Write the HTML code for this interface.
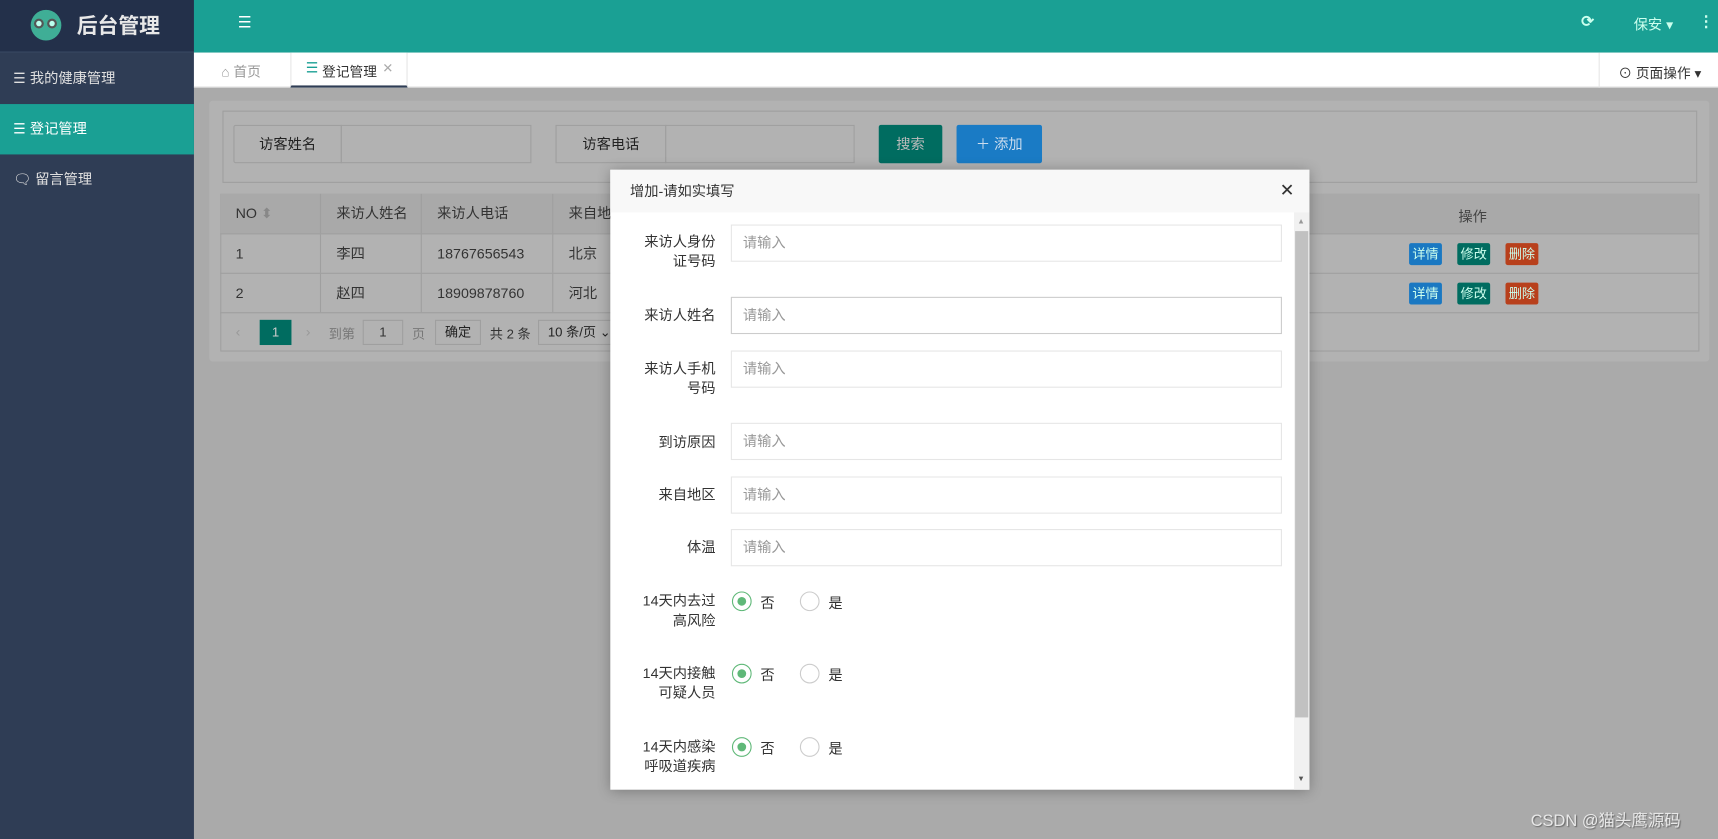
<!DOCTYPE html>
<html><head><meta charset="utf-8"><style>
*{box-sizing:border-box;margin:0;padding:0}
html,body{width:1718px;height:839px;overflow:hidden;background:#aaa}
body{font-family:"Liberation Sans","Noto Sans CJK SC",sans-serif;font-size:13px;color:#333}
#w{position:absolute;left:0;top:0;width:1568px;height:766px;transform:scale(1.0957,1.0953);transform-origin:0 0}
.a{position:absolute}
.side{left:0;top:0;width:177px;height:766px;background:#2f3d55}
.logo{left:0;top:0;width:177px;height:48px;background:#23304a;border-bottom:1px solid #3a4a64}
.mi{left:0;width:177px;height:46px;line-height:46px;padding-left:12px;color:#e0e0e0;font-size:13px}
.hdr{left:177px;top:0;width:1391px;height:48px;background:#1aa094}
.tabs{left:177px;top:48px;width:1391px;height:32px;background:#fff;border-bottom:1px solid #ddd}
.panel{left:191px;top:92px;width:1369px;height:238px;background:#b2b2b2;border-radius:3px}
.lb{border:1px solid #9f9f9f;height:35px;line-height:33px;font-size:13px;color:#222}
.th{background:#a9a9a9}
.cell{position:absolute;line-height:35px;padding-left:14px;color:#333;border-right:1px solid #9f9f9f;height:100%}
.row{position:absolute;left:201px;width:1349px;border-bottom:1px solid #9f9f9f}
.ob{position:absolute;width:30px;height:20px;line-height:20px;text-align:center;color:#cfe;font-size:12px;border-radius:2px}
.modal{left:557px;top:155px;width:638px;height:566px;background:#fff;box-shadow:0 1px 12px rgba(0,0,0,.3)}
.mh{left:0;top:0;width:638px;height:39px;background:#f8f8f8;line-height:39px;padding-left:18px;font-size:13px;color:#333}
.fl{position:absolute;right:542px;text-align:right;font-size:13px;line-height:18px;color:#333;width:90px}
.in{position:absolute;left:110px;width:503px;height:34px;border:1px solid #e6e6e6;line-height:32px;padding-left:10px;color:#999;font-size:13px}
.rd{position:absolute;width:18px;height:18px;border-radius:50%;border:1px solid #ccc}
.rd.on{border-color:#5fb878}
.rd.on:after{content:"";position:absolute;left:4px;top:4px;width:8px;height:8px;border-radius:50%;background:#5fb878}
.rt{position:absolute;font-size:13px;color:#333}
</style></head><body><div id="w">
<div class="a side"></div>
<div class="a logo">
 <div class="a" style="left:28px;top:9px;width:28px;height:28px;border-radius:50%;background:#3fae96"></div>
 <div class="a" style="left:31px;top:17px;width:9px;height:9px;border-radius:50%;background:#bfe;border:2px solid #555"></div>
 <div class="a" style="left:43px;top:17px;width:9px;height:9px;border-radius:50%;background:#bfe;border:2px solid #555"></div>
 <div class="a" style="left:70px;top:9px;color:#e8e8e8;font-size:19px;font-weight:bold">后台管理</div>
</div>
<div class="a mi" style="top:49px">☰ 我的健康管理</div>
<div class="a mi" style="top:95px;background:#1aa094;color:#fff">☰ 登记管理</div>
<div class="a mi" style="top:141px">🗨 留言管理</div>
<div class="a hdr">
 <div class="a" style="left:40px;top:12px;color:#fff;font-size:14px">☰</div>
 <div class="a" style="left:1266px;top:11px;color:#cfe;font-size:14px;font-weight:bold">⟳</div>
 <div class="a" style="left:1314px;top:12px;color:#cfe;font-size:13px">保安 ▾</div>
 <div class="a" style="left:1373px;top:11px;color:#cfe;font-size:14px;font-weight:bold">⋮</div>
</div>
<div class="a tabs">
 <div class="a" style="left:25px;top:7px;color:#999;font-size:12.5px">⌂ 首页</div>
 <div class="a" style="left:88px;top:0;width:107px;height:32px;border-left:1px solid #e6e6e6;border-right:1px solid #e6e6e6;border-bottom:2px solid #2f3d55;background:#fff">
  <span class="a" style="left:13px;top:6px;color:#1aa094">☰</span><span class="a" style="left:28px;top:7px;color:#333;font-size:12.5px">登记管理</span><span class="a" style="left:83px;top:7px;color:#aaa;font-size:12px">✕</span>
 </div>
 <div class="a" style="left:1282px;top:0;width:109px;height:32px;border-left:1px solid #e6e6e6;padding:8px 0 0 17px;color:#333;font-size:12.5px">⊙ 页面操作 ▾</div>
</div>
<div class="a panel"></div>
<div class="a" style="left:203px;top:101px;width:1346px;height:66px;border:1px solid #9f9f9f"></div>
<div class="a lb" style="left:213px;top:114px;width:99px;text-align:center;border-radius:2px 0 0 2px">访客姓名</div>
<div class="a lb" style="left:311px;top:114px;width:174px"></div>
<div class="a lb" style="left:507px;top:114px;width:101px;text-align:center">访客电话</div>
<div class="a lb" style="left:607px;top:114px;width:173px"></div>
<div class="a" style="left:802px;top:114px;width:58px;height:35px;background:#006c60;color:#bbb;line-height:35px;text-align:center;border-radius:2px">搜索</div>
<div class="a" style="left:873px;top:114px;width:78px;height:35px;background:#1a7bc5;color:#cde;line-height:35px;text-align:center;border-radius:2px">＋ 添加</div>
<div class="a" style="left:201px;top:177px;width:1350px;height:144px;border:1px solid #9f9f9f"></div>
<div class="row th" style="top:177px;height:37px">
 <div class="cell" style="left:0;width:92px">NO <span style="color:#888">⬍</span></div>
 <div class="cell" style="left:92px;width:92px">来访人姓名</div>
 <div class="cell" style="left:184px;width:120px">来访人电话</div>
 <div class="cell" style="left:304px;width:80px">来自地</div>
 <div class="a" style="left:1130px;top:10px;color:#444">操作</div>
</div>
<div class="row" style="top:214px;height:36px">
 <div class="cell" style="left:0;width:92px">1</div><div class="cell" style="left:92px;width:92px">李四</div><div class="cell" style="left:184px;width:120px">18767656543</div><div class="cell" style="left:304px;width:80px">北京</div>
 <div class="ob" style="left:1085px;top:8px;background:#1a78c2">详情</div><div class="ob" style="left:1129px;top:8px;background:#006c60">修改</div><div class="ob" style="left:1173px;top:8px;background:#b8401c">删除</div>
</div>
<div class="row" style="top:250px;height:36px">
 <div class="cell" style="left:0;width:92px">2</div><div class="cell" style="left:92px;width:92px">赵四</div><div class="cell" style="left:184px;width:120px">18909878760</div><div class="cell" style="left:304px;width:80px">河北</div>
 <div class="ob" style="left:1085px;top:8px;background:#1a78c2">详情</div><div class="ob" style="left:1129px;top:8px;background:#006c60">修改</div><div class="ob" style="left:1173px;top:8px;background:#b8401c">删除</div>
</div>
<div class="a" style="left:215px;top:295px;color:#999">‹</div>
<div class="a" style="left:237px;top:292px;width:29px;height:23px;background:#006c60;color:#ccc;text-align:center;line-height:23px;font-size:12px">1</div>
<div class="a" style="left:279px;top:295px;color:#999">›</div>
<div class="a" style="left:300px;top:296px;color:#777;font-size:12px">到第</div>
<div class="a" style="left:331px;top:292px;width:37px;height:23px;border:1px solid #9f9f9f;text-align:center;line-height:21px;font-size:12px">1</div>
<div class="a" style="left:376px;top:296px;color:#777;font-size:12px">页</div>
<div class="a" style="left:397px;top:292px;width:42px;height:23px;border:1px solid #9f9f9f;text-align:center;line-height:21px;font-size:12px;color:#222">确定</div>
<div class="a" style="left:447px;top:296px;color:#333;font-size:12px">共 2 条</div>
<div class="a" style="left:491px;top:292px;width:70px;height:23px;border:1px solid #9f9f9f;line-height:21px;padding-left:8px;font-size:12px;color:#222">10 条/页 ⌄</div>
<div class="a" style="left:1397px;top:738px;color:#e8e8e8;font-size:15px;text-shadow:1px 1px 1px #666">CSDN @猫头鹰源码</div>

<div class="a modal">
 <div class="a mh">增加-请如实填写<span class="a" style="left:611px;top:0;font-size:16px;color:#333">✕</span></div>
 <div class="a" style="left:624px;top:39px;width:14px;height:527px;background:#f1f1f1"></div>
 <div class="a" style="left:625px;top:56px;width:12px;height:444px;background:#c1c1c1"></div>
 <div class="a" style="left:627px;top:44px;font-size:7px;color:#999">▲</div>
 <div class="a" style="left:627px;top:553px;font-size:7px;color:#555">▼</div>
 <div class="fl" style="top:57px">来访人身份<br>证号码</div><div class="in" style="top:50px">请输入</div>
 <div class="fl" style="top:124px">来访人姓名</div><div class="in" style="top:116px;border-color:#ccc">请输入</div>
 <div class="fl" style="top:173px">来访人手机<br>号码</div><div class="in" style="top:165px">请输入</div>
 <div class="fl" style="top:240px">到访原因</div><div class="in" style="top:231px">请输入</div>
 <div class="fl" style="top:288px">来自地区</div><div class="in" style="top:280px">请输入</div>
 <div class="fl" style="top:336px">体温</div><div class="in" style="top:328px">请输入</div>
 <div class="fl" style="top:385px">14天内去过<br>高风险</div>
 <div class="rd on" style="left:111px;top:385px"></div><div class="rt" style="left:137px;top:385px">否</div>
 <div class="rd" style="left:173px;top:385px"></div><div class="rt" style="left:199px;top:385px">是</div>
 <div class="fl" style="top:451px">14天内接触<br>可疑人员</div>
 <div class="rd on" style="left:111px;top:451px"></div><div class="rt" style="left:137px;top:451px">否</div>
 <div class="rd" style="left:173px;top:451px"></div><div class="rt" style="left:199px;top:451px">是</div>
 <div class="fl" style="top:518px">14天内感染<br>呼吸道疾病</div>
 <div class="rd on" style="left:111px;top:518px"></div><div class="rt" style="left:137px;top:518px">否</div>
 <div class="rd" style="left:173px;top:518px"></div><div class="rt" style="left:199px;top:518px">是</div>
</div>
</div></body></html>
